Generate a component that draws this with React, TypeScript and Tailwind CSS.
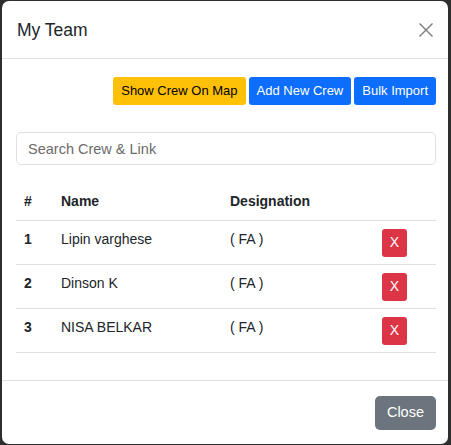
export default function App() {
  const crew = [
    { id: 1, name: "Lipin varghese", designation: "( FA )" },
    { id: 2, name: "Dinson K", designation: "( FA )" },
    { id: 3, name: "NISA BELKAR", designation: "( FA )" },
  ];

  return (
    <div
      className="h-[445px] w-[451px] overflow-hidden bg-[#2e2e2e] pl-[2px] pr-[3px] pt-[1px] text-[#212529]"
      style={{ fontFamily: '"Liberation Sans", Arial, sans-serif' }}
    >
      <div className="flex h-[443px] flex-col rounded-[7px] bg-white">
        {/* header */}
        <div className="flex h-[58px] items-center justify-between border-b border-[#dee2e6] pl-[15px] pr-[12px]">
          <h5 className="text-[17.5px] leading-[26px]">My Team</h5>
          <button className="flex h-[20px] w-[20px] items-center justify-center">
            <svg width="14" height="14" viewBox="0 0 14 14" fill="none" stroke="#7a7a7a" strokeWidth="1.4">
              <path d="M0.5 0.5L13.5 13.5M13.5 0.5L0.5 13.5" />
            </svg>
          </button>
        </div>

        {/* body */}
        <div className="flex-1 pl-[14px] pr-[12px] pt-[18px]">
          <div className="flex justify-end gap-[3px]">
            <button className="h-[28px] rounded-[3px] bg-[#ffc107] px-[8px] text-[13px] text-black">Show Crew On Map</button>
            <button className="h-[28px] rounded-[3px] bg-[#0d6efd] px-[8px] text-[13px] text-white">Add New Crew</button>
            <button className="h-[28px] rounded-[3px] bg-[#0d6efd] px-[8px] text-[13px] text-white">Bulk Import</button>
          </div>

          <input
            placeholder="Search Crew & Link"
            className="mt-[27px] block h-[33px] w-full rounded-[5px] border border-[#dee2e6] px-[11px] text-[14.5px] placeholder:text-[#6c6c6c] outline-none"
          />

          <table className="mt-[18px] w-full border-collapse text-left text-[14px] leading-[21px]">
            <thead>
              <tr className="border-b border-[#dee2e6]">
                <th className="w-[37px] px-[8px] py-[8px] font-bold">#</th>
                <th className="w-[169px] px-[8px] py-[8px] font-bold">Name</th>
                <th className="px-[8px] py-[8px] font-bold">Designation</th>
                <th className="w-[60px] px-[8px] py-[8px]"></th>
              </tr>
            </thead>
            <tbody>
              {crew.map((c) => (
                <tr key={c.id} className="border-b border-[#dee2e6] align-top">
                  <td className="px-[8px] py-[7.5px] font-bold">{c.id}</td>
                  <td className="px-[8px] py-[7.5px]">{c.name}</td>
                  <td className="px-[8px] py-[7.5px]">{c.designation}</td>
                  <td className="px-[6px] py-[7.5px]">
                    <button className="block h-[28px] w-[25px] rounded-[3px] bg-[#dc3545] text-[14px] text-white">X</button>
                  </td>
                </tr>
              ))}
            </tbody>
          </table>
        </div>

        {/* footer */}
        <div className="flex h-[64px] items-center justify-end border-t border-[#dee2e6] pr-[12px]">
          <button className="h-[34px] rounded-[5px] bg-[#6c757d] px-[12px] text-[14.5px] text-white">Close</button>
        </div>
      </div>
    </div>
  );
}
